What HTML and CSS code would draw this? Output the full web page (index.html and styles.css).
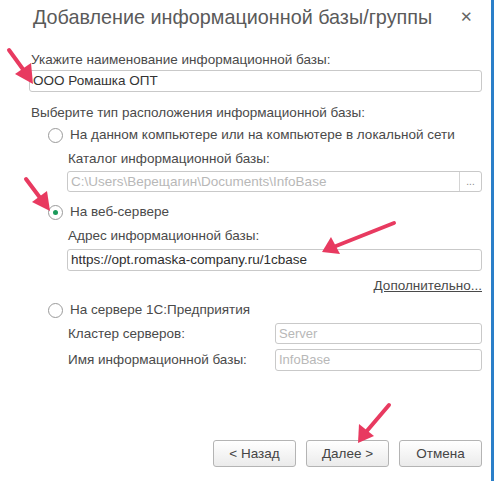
FILE: index.html
```html
<!DOCTYPE html>
<html lang="ru">
  <head>
    <meta charset="UTF-8" />
    <meta name="viewport" content="width=device-width, initial-scale=1.0" />
    <title>Добавление информационной базы/группы</title>
    <link rel="stylesheet" href="styles.css">
  </head>

  <body>
    <div class="page">
      <div class="dialog">
        <div class="title-row">
          <span class="title">Добавление информационной базы/группы</span>
          <span class="close">&#x2715;</span>
        </div>

        <div class="label first">Укажите наименование информационной базы:</div>
        <div class="field">ООО Ромашка ОПТ</div>

        <div class="label choose">Выберите тип расположения информационной базы:</div>

        <div class="radio-row r1">
          <span class="radio"></span>
          <span>На данном компьютере или на компьютере в локальной сети</span>
        </div>
        <div class="sub">
          <div class="label sub-label">Каталог информационной базы:</div>
          <div class="field disabled with-btn">
            <span class="field-text">C:\Users\Верещагин\Documents\InfoBase</span>
            <span class="dots">...</span>
          </div>
        </div>

        <div class="radio-row r2">
          <span class="radio checked"></span>
          <span>На веб-сервере</span>
        </div>
        <div class="sub">
          <div class="label sub-label">Адрес информационной базы:</div>
          <div class="field url">https://opt.romaska-company.ru/1cbase</div>
          <div class="more"><a href="#">Дополнительно...</a></div>
        </div>

        <div class="radio-row r3">
          <span class="radio"></span>
          <span>На сервере 1С:Предприятия</span>
        </div>
        <div class="sub">
          <div class="pair">
            <span class="label">Кластер серверов:</span>
            <span class="field disabled small">Server</span>
          </div>
          <div class="pair second">
            <span class="label">Имя информационной базы:</span>
            <span class="field disabled small">InfoBase</span>
          </div>
        </div>

        <div class="buttons">
          <button>&lt; Назад</button>
          <button>Далее &gt;</button>
          <button>Отмена</button>
        </div>
      </div>
      <div class="edge"></div>
    </div>

    <!-- red annotation arrows drawn on top of the screenshot -->
    <svg class="arrows" width="498" height="481" viewBox="0 0 498 481">
      <g stroke="#e83a60" stroke-width="4" stroke-linecap="round" fill="#e83a60">
        <line x1="9" y1="50" x2="25" y2="72" />
        <polygon points="33,84 15,74 31,63" stroke="none" />
        <line x1="26" y1="179" x2="41" y2="199" />
        <polygon points="50,211 32,202 47,191" stroke="none" />
        <line x1="394" y1="223" x2="336" y2="246" />
        <polygon points="322,252 331,237 340,254" stroke="none" />
        <line x1="389" y1="405" x2="366" y2="432" />
        <polygon points="358,443 359,424 374,436" stroke="none" />
      </g>
    </svg>
  </body>
</html>
```

FILE: styles.css
```css
body {
  margin: 0;
  font-family: "Liberation Sans", Arial, sans-serif;
  color: #4a4a4a;
  background: #fff;
}

.page {
  display: flex;
  width: 498px;
  height: 481px;
}

.dialog {
  width: 453px;
  padding: 0 9px 0 29px;
  font-size: 13.5px;
}

.edge {
  width: 3px;
  background: #2a7fc9;
}

.title-row {
  display: flex;
  align-items: center;
  height: 34px;
  margin-left: 4px;
}

.title {
  font-size: 19.8px;
  color: #5a5a5a;
  flex: 1;
}

.close {
  font-size: 15px;
  color: #666;
  margin-right: 9px;
}

.label {
  line-height: 16px;
  white-space: nowrap;
}

.first {
  margin-top: 18px;
  margin-left: 2px;
}

.field {
  box-sizing: border-box;
  height: 22px;
  line-height: 20px;
  border: 1px solid #c9c9c9;
  border-radius: 3px;
  padding: 0 3px;
  margin-top: 2px;
  color: #333;
}

.choose {
  margin-top: 13px;
  margin-left: 2px;
}

.radio-row {
  display: flex;
  align-items: center;
  gap: 7px;
  line-height: 16px;
  margin-left: 19px;
}

.r1 {
  margin-top: 6px;
}

.r2 {
  margin-top: 12px;
}

.r3 {
  margin-top: 8px;
}

.radio {
  box-sizing: border-box;
  width: 15px;
  height: 15px;
  border: 1px solid #9a9a9a;
  border-radius: 50%;
  display: flex;
  align-items: center;
  justify-content: center;
}

.radio.checked::after {
  content: "";
  width: 5px;
  height: 5px;
  border-radius: 50%;
  background: #1a9a5a;
}

.sub {
  margin-left: 38px;
}

.sub-label {
  margin-top: 8px;
  margin-left: 1px;
}

.disabled {
  color: #b8b8b8;
}

.with-btn {
  display: flex;
  height: 21px;
  margin-top: 4px;
  padding: 0;
  line-height: 19px;
}

.field-text {
  flex: 1;
  padding-left: 3px;
}

.dots {
  width: 21px;
  border-left: 1px solid #d4d4d4;
  text-align: center;
  font-size: 10px;
  color: #888;
}

.url {
  margin-top: 5px;
  color: #2e2e2e;
}

.more {
  text-align: right;
  margin-top: 7px;
  line-height: 16px;
}

.more a {
  color: #4a4a4a;
  font-size: 13.5px;
}

.pair {
  display: flex;
  align-items: center;
  margin-top: 5px;
}

.pair .label {
  width: 207px;
  margin-left: 1px;
}

.small {
  flex: 1;
  height: 21px;
  line-height: 19px;
  margin-top: 0;
  font-size: 13px;
}

.pair.second .small {
  height: 22px;
}

.buttons {
  display: flex;
  justify-content: flex-end;
  gap: 10px;
  margin-top: 69px;
}

button {
  width: 83px;
  height: 27px;
  border: 1px solid #b4b4b4;
  border-radius: 3px;
  background: linear-gradient(#ffffff, #ebebeb);
  font-family: "Liberation Sans", Arial, sans-serif;
  font-size: 13.5px;
  color: #444;
  padding: 0;
}

.arrows {
  position: absolute;
  left: 0;
  top: 0;
}
```
